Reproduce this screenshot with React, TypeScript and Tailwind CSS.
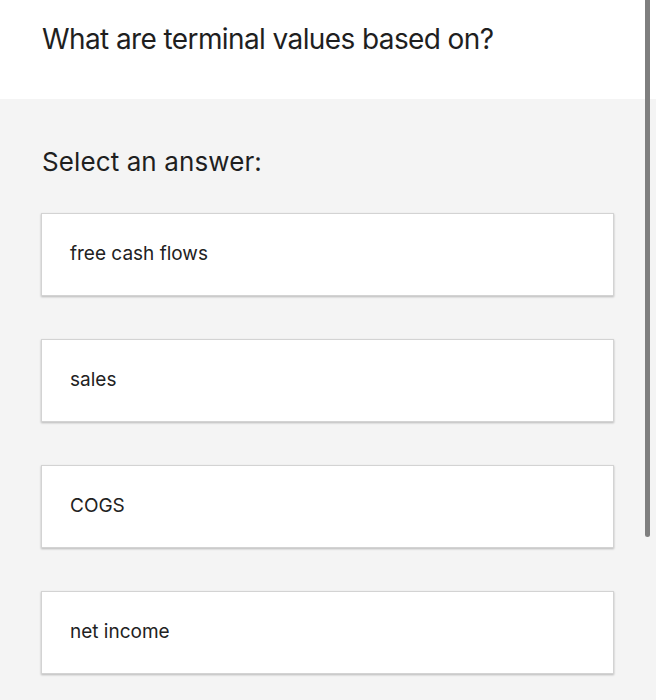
import * as React from 'react';

const answers = ['free cash flows', 'sales', 'COGS', 'net income'];

export default function App() {
  return (
    <div
      className="relative h-[700px] w-[656px] overflow-hidden bg-[#f4f4f4] text-[#1f1f1f]"
      style={{fontFamily: 'Inter, "Liberation Sans", Arial, sans-serif'}}
    >
      <header className="h-[99px] bg-white px-[42px] pt-[22px]">
        <h1 className="m-0 text-[28px] leading-[34px] font-normal tracking-[-0.6px]">
          What are terminal values based on?
        </h1>
      </header>

      <main className="px-[41px] pt-[47px]">
        <p className="m-0 pl-[1px] text-[26px] leading-[32px] tracking-[0.1px]">Select an answer:</p>
        <ul className="m-0 mt-[35px] flex list-none flex-col gap-[43px] p-0">
          {answers.map((a) => (
            <li key={a}>
              <button
                type="button"
                className="flex h-[83px] w-[573px] items-center border border-[#d3d3d3] bg-white pl-[28px] text-left text-[19px] text-[#222] shadow-[0_1px_2px_rgba(0,0,0,0.25)]"
              >
                {a}
              </button>
            </li>
          ))}
        </ul>
      </main>

      {/* scrollbar thumb overlay */}
      <div className="absolute right-[6px] top-0 h-[537px] w-[5px] rounded-b-full bg-[#7f7f7f]" />
    </div>
  );
}
